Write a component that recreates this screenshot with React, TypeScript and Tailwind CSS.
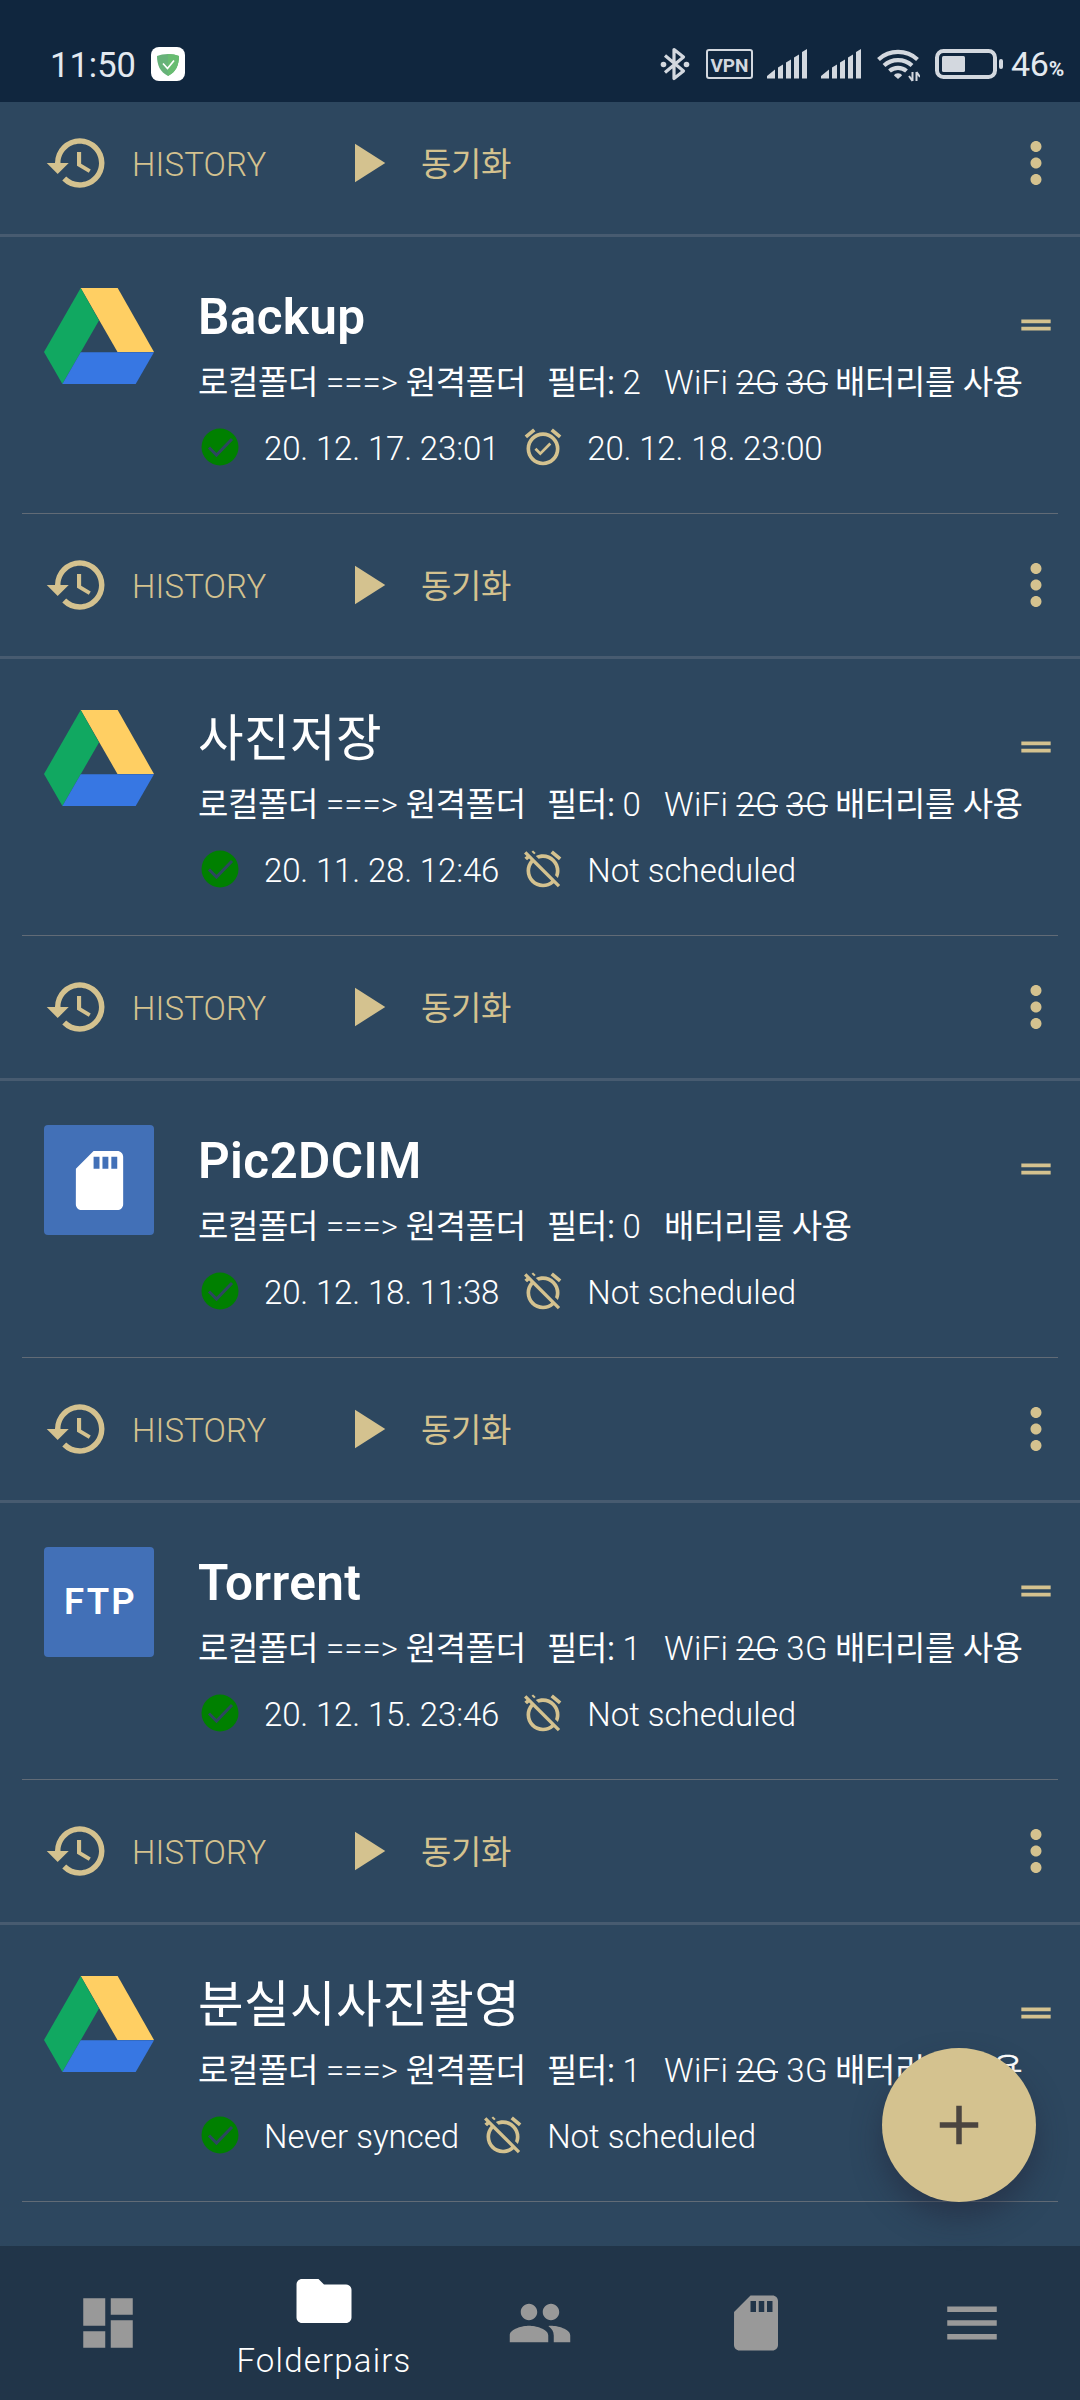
import React from "react";
import {
  MdHistory, MdPlayArrow, MdMoreVert, MdDragHandle, MdAlarmOn, MdAlarmOff,
  MdDashboard, MdFolder, MdPeople, MdSdStorage, MdMenu, MdAdd,
} from "react-icons/md";

type Pair = {
  name: string;
  latin: boolean;
  icon: "drive" | "sd" | "ftp";
  filters: number;
  wifi: boolean;
  g3?: "on" | "off";
  last: string;
  next: string | null;
};

const pairs: Pair[] = [
  { name: "Backup", latin: true, icon: "drive", filters: 2, wifi: true, g3: "off", last: "20. 12. 17. 23:01", next: "20. 12. 18. 23:00" },
  { name: "사진저장", latin: false, icon: "drive", filters: 0, wifi: true, g3: "off", last: "20. 11. 28. 12:46", next: null },
  { name: "Pic2DCIM", latin: true, icon: "sd", filters: 0, wifi: false, last: "20. 12. 18. 11:38", next: null },
  { name: "Torrent", latin: true, icon: "ftp", filters: 1, wifi: true, g3: "on", last: "20. 12. 15. 23:46", next: null },
  { name: "분실시사진촬영", latin: false, icon: "drive", filters: 1, wifi: true, g3: "on", last: "Never synced", next: null },
];

function Signal() {
  return (
    <svg width="40" height="30" viewBox="0 0 40 30" fill="#d3d8df">
      <path d="M0 29.5V27l8-6.500v9zM11 18.500l5-3v14h-5zM19 13.500l5-3v19h-5zM27 8.500l5-3v24h-5zM35 3l5-3v29.500h-5z" />
    </svg>
  );
}

function StatusBar() {
  return (
    <header className="flex h-[102px] shrink-0 items-start bg-[#10263e] pl-[50px] text-[#e3e9f0]">
      <span className="mt-[45px] w-[101px] text-[34.5px] leading-10">11:50</span>
      <svg className="mt-[47px]" width="34" height="34" viewBox="0 0 34 34">
        <rect width="34" height="34" rx="8" fill="#fff" />
        <path d="M17 7c4 0 8 .8 11 2 0 9-3 16-11 20C9 25 6 18 6 9c3-1.200 7-2 11-2z" fill="#67b279" />
        <path d="M17 7c4 0 8 .8 11 2 0 9-3 16-11 20z" fill="#68bc71" />
        <path d="M12 16.500l4.500 5L23 13.500" fill="none" stroke="#fff" strokeWidth="1.700" />
      </svg>
      <svg className="mt-[47px] ml-[475px]" width="30" height="34" viewBox="0 0 30 34" fill="none" stroke="#d3d8df" strokeWidth="3.200">
        <path d="M5 8.500l18.500 15.500L14 31.500V2.500L23.500 10 5 25.500" strokeLinejoin="round" />
        <circle cx="3.500" cy="17.500" r="2.800" fill="#d3d8df" stroke="none" />
        <circle cx="26.500" cy="17.500" r="2.800" fill="#d3d8df" stroke="none" />
      </svg>
      <span className="mt-[49px] ml-[16px] flex h-[30px] w-[47px] items-center justify-center rounded-[3px] border-2 border-[#d3d8df] pt-[2px] text-[19px] leading-none font-bold text-[#d3d8df]">VPN</span>
      <span className="mt-[49px] ml-[14px]"><Signal /></span>
      <span className="mt-[49px] ml-[14px]"><Signal /></span>
      <svg className="mt-[49px] ml-[16px]" width="43" height="34" viewBox="0 0 43 34" fill="none" stroke="#d3d8df" strokeWidth="4.200">
        <path d="M1.500 10.500a29 29 0 0 1 39 0M7 16.500a21 21 0 0 1 28 0M12.500 22a13 13 0 0 1 17 0" />
        <path d="M17 26.500c1-3 7-3 8 0l-4 3.500z" fill="#d3d8df" stroke="none" />
        <path d="M35.500 23v9M39.500 23v9M32 27l3.500 5M43 28l-3.500-5" strokeWidth="2" />
      </svg>
      <svg className="mt-[49px] ml-[15px]" width="68" height="30" viewBox="0 0 68 30">
        <rect x="2" y="2" width="58" height="26" rx="6.500" fill="none" stroke="#d3d8df" strokeWidth="4" />
        <rect x="7" y="7" width="23" height="16" rx="1.500" fill="#d3d8df" />
        <rect x="64" y="10" width="4" height="10" rx="2" fill="#d3d8df" />
      </svg>
      <span className="mt-[44px] ml-[8px] text-[34px] leading-10 tracking-[-0.3px]">46<span className="text-[21px] font-bold tracking-[0px]">%</span></span>
    </header>
  );
}

function Actions() {
  return (
    <div className="flex h-[142px] items-center pl-[44px] pr-[11px] text-[#d4c28f]">
      <MdHistory size={66} />
      <span className="ml-[22px] w-[201px] pt-[3px] text-[33px] font-light tracking-[0.15px]">HISTORY</span>
      <MdPlayArrow size={66} />
      <span className="ml-[22px] pt-[3px] text-[33px] tracking-[-0.36px]">동기화</span>
      <MdMoreVert size={66} className="ml-auto" />
    </div>
  );
}

function DriveLogo() {
  return (
    <svg width="110" height="110" viewBox="0 0 110 110">
      <path d="M36.700 7h37L110 71H73.500z" fill="#ffcf63" />
      <path d="M36.700 7L55 39.500 18.400 103 0 71z" fill="#11a861" />
      <path d="M36.700 71.300H110L91.700 103H18.400z" fill="#3777e3" />
    </svg>
  );
}

function Provider({ icon }: { icon: Pair["icon"] }) {
  if (icon === "drive") return <DriveLogo />;
  return (
    <div className="flex size-[110px] items-center justify-center rounded-[4px] bg-[#4270b7] text-white">
      {icon === "sd" ? <MdSdStorage size={71} /> : <span className="pl-[3px] text-[36.5px] leading-none font-semibold tracking-[2.2px]">FTP</span>}
    </div>
  );
}

function CheckBadge() {
  return (
    <svg width="44" height="44" viewBox="0 0 44 44">
      <circle cx="22" cy="22" r="18.500" fill="#008000" />
      <path d="M11 22.500l7.500 7.500L34 14" fill="none" stroke="#2d475f" strokeWidth="3" />
    </svg>
  );
}

function Ko({ children }: { children: React.ReactNode }) {
  return <span className="font-normal tracking-[-0.4px]">{children}</span>;
}

function Stamp({ text }: { text: string }) {
  return <span className={/^\d/.test(text) ? "pt-[3px] tracking-[-0.15px]" : "pt-[3px]"}>{text}</span>;
}

function PairCard({ pair }: { pair: Pair }) {
  return (
    <section className="h-[280px] shrink-0 border-t-[3px] border-[#475b70]">
      <div className="flex h-[276px] pl-[44px]">
        <div className="mt-[44px] h-[110px] w-[154px] shrink-0"><Provider icon={pair.icon} /></div>
        <div className="flex grow flex-col pt-[48px] text-white">
          <div className="flex h-[64px] items-center pr-[22px]">
            <h2 className={pair.latin ? "text-[49.5px] leading-[64px] font-semibold tracking-[0.35px]" : "text-[49.5px] leading-[64px] tracking-[0.5px]"}>{pair.name}</h2>
            <MdDragHandle size={44} className="mt-[16px] ml-auto text-[#d4c28f]" />
          </div>
          <div className="mt-[5px] flex h-[58px] items-center text-[33px] leading-[58px] font-light whitespace-pre">
            <span className="w-[349px]"><Ko>로컬폴더</Ko> ===&gt; <Ko>원격폴더</Ko></span>
            <span className="w-[117px]"><Ko>필터:</Ko> {pair.filters}</span>
            {pair.wifi && (
              <span className="w-[171px] tracking-[0.3px]">WiFi <s className="decoration-2">2G</s> {pair.g3 === "off" ? <s className="decoration-2">3G</s> : "3G"}</span>
            )}
            <Ko>배터리를 사용</Ko>
          </div>
          <div className="mt-[13px] flex h-[44px] items-center gap-[22px] text-[33px] leading-[44px] font-light">
            <CheckBadge />
            <Stamp text={pair.last} />
            {pair.next ? <MdAlarmOn size={44} className="text-[#d4c28f]" /> : <MdAlarmOff size={44} className="text-[#d4c28f]" />}
            <Stamp text={pair.next ?? "Not scheduled"} />
          </div>
        </div>
      </div>
      <div className="mx-[22px] h-px bg-[#616b76]" />
    </section>
  );
}

function BottomNav() {
  return (
    <nav className="relative grid h-[154px] shrink-0 grid-cols-5 items-center justify-items-center bg-[#213549] text-[#999]">
      <MdDashboard size={66} />
      <div className="flex h-full flex-col items-center pt-[22px] text-white">
        <MdFolder size={66} />
        <span className="mt-[7px] text-[33px] leading-10 font-light tracking-[1.2px]">Folderpairs</span>
      </div>
      <MdPeople size={66} />
      <MdSdStorage size={66} />
      <MdMenu size={66} />
    </nav>
  );
}

export default function App() {
  return (
    <div className="relative flex h-[2400px] w-[1080px] flex-col overflow-hidden bg-[#2d475f] font-['Roboto','Noto_Sans_CJK_KR',sans-serif]">
      <StatusBar />
      <main className="flex min-h-0 grow flex-col overflow-hidden">
        <div className="-mt-[10px] h-[142px] shrink-0"><Actions /></div>
        {pairs.map((p, i) => (
          <React.Fragment key={p.name}>
            <PairCard pair={p} />
            {i < pairs.length - 1 && <Actions />}
          </React.Fragment>
        ))}
      </main>
      <BottomNav />
      <button className="absolute right-[44px] bottom-[198px] flex size-[154px] items-center justify-center rounded-full bg-[#d4c28f] text-[#4b4540] shadow-[0_16px_28px_rgba(33,38,58,0.5)]">
        <MdAdd size={66} />
      </button>
    </div>
  );
}
